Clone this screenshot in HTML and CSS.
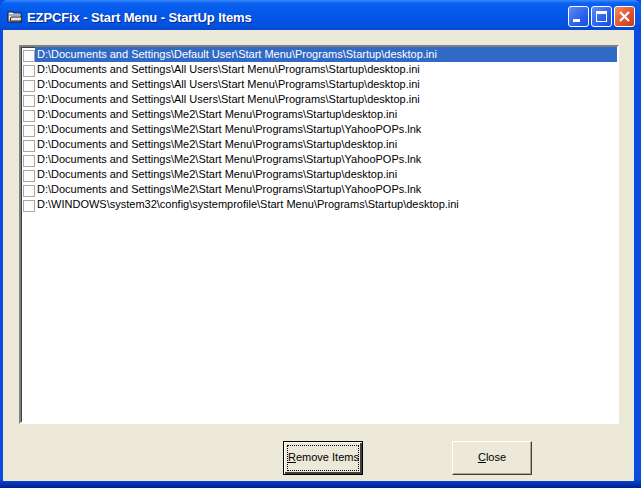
FILE: index.html
```html
<!DOCTYPE html>
<html lang="en">
<head>
    <meta charset="UTF-8">
    <title>EZPCFix - Start Menu - StartUp Items</title>
    <link rel="stylesheet" href="styles.css">
</head>
<body>
    <div class="window">
        <div class="titlebar">
            <svg class="app-icon" width="16" height="14" viewBox="0 0 16 14">
                <path d="M1 2h5l1 1h7v9H1z" fill="#f4f4f4" stroke="#202020" stroke-width="1.2"/>
                <path d="M2 5h12" stroke="#7a9ad0" stroke-width="1.5"/>
                <path d="M3 11l1-4h11l-1 4z" fill="#e6e6e6" stroke="#202020" stroke-width="1"/>
            </svg>
            <div class="title">EZPCFix - Start Menu - StartUp Items</div>
            <div class="caption-buttons">
                <div class="cap-btn">
                    <svg width="21" height="21" viewBox="0 0 21 21"><rect x="5" y="13" width="7" height="3" fill="#fff"/></svg>
                </div>
                <div class="cap-btn">
                    <svg width="21" height="21" viewBox="0 0 21 21"><rect x="5.5" y="5.5" width="10" height="10" fill="none" stroke="#fff"/><rect x="5" y="5" width="11" height="3" fill="#fff"/></svg>
                </div>
                <div class="cap-btn close">
                    <svg width="21" height="21" viewBox="0 0 21 21"><path d="M6 6l9 9M15 6l-9 9" stroke="#fff" stroke-width="2.2"/></svg>
                </div>
            </div>
        </div>
        <div class="frame">
            <div class="client">
                <div class="listbox">
                    <div class="row selected"><span class="check"></span><span class="label">D:\Documents and Settings\Default User\Start Menu\Programs\Startup\desktop.ini</span></div>
                    <div class="row"><span class="check"></span><span class="label">D:\Documents and Settings\All Users\Start Menu\Programs\Startup\desktop.ini</span></div>
                    <div class="row"><span class="check"></span><span class="label">D:\Documents and Settings\All Users\Start Menu\Programs\Startup\desktop.ini</span></div>
                    <div class="row"><span class="check"></span><span class="label">D:\Documents and Settings\All Users\Start Menu\Programs\Startup\desktop.ini</span></div>
                    <div class="row"><span class="check"></span><span class="label">D:\Documents and Settings\Me2\Start Menu\Programs\Startup\desktop.ini</span></div>
                    <div class="row"><span class="check"></span><span class="label">D:\Documents and Settings\Me2\Start Menu\Programs\Startup\YahooPOPs.lnk</span></div>
                    <div class="row"><span class="check"></span><span class="label">D:\Documents and Settings\Me2\Start Menu\Programs\Startup\desktop.ini</span></div>
                    <div class="row"><span class="check"></span><span class="label">D:\Documents and Settings\Me2\Start Menu\Programs\Startup\YahooPOPs.lnk</span></div>
                    <div class="row"><span class="check"></span><span class="label">D:\Documents and Settings\Me2\Start Menu\Programs\Startup\desktop.ini</span></div>
                    <div class="row"><span class="check"></span><span class="label">D:\Documents and Settings\Me2\Start Menu\Programs\Startup\YahooPOPs.lnk</span></div>
                    <div class="row"><span class="check"></span><span class="label">D:\WINDOWS\system32\config\systemprofile\Start Menu\Programs\Startup\desktop.ini</span></div>
                </div>
                <div class="actions">
                    <button class="btn default"><span class="focus"><u>R</u>emove Items</span></button>
                    <button class="btn"><span class="focus"><u>C</u>lose</span></button>
                </div>
            </div>
        </div>
    </div>
</body>
</html>
```

FILE: styles.css
```css
body {
    margin: 0;
    padding: 0;
    background: #0a4be0;
    font-family: "Liberation Sans", Arial, sans-serif;
}

.window {
    width: 641px;
    height: 488px;
    display: flex;
    flex-direction: column;
    background: #0a4be0;
    border-radius: 7px 7px 0 0;
    overflow: hidden;
}

.titlebar {
    height: 30px;
    display: flex;
    align-items: center;
    background: linear-gradient(#3d8bff 0, #0a62f0 3px, #0558ea 40%, #0352e2 80%, #0448d4 100%);
}

.app-icon {
    margin-left: 7px;
    margin-top: 4px;
}

.title {
    margin-left: 4px;
    margin-top: 4px;
    color: #fff;
    font-family: "Liberation Sans", Arial, sans-serif;
    font-weight: bold;
    font-size: 13px;
    letter-spacing: -0.1px;
    text-shadow: 1px 1px 0 #0a2a8a;
    flex: 1;
}

.caption-buttons {
    display: flex;
    gap: 2px;
    margin-right: 6px;
    margin-top: 2px;
}

.cap-btn {
    width: 21px;
    height: 21px;
    border: 1px solid #fff;
    border-radius: 3px;
    box-sizing: border-box;
    background: linear-gradient(135deg, #5a8cf8 0%, #2a62ec 60%, #1a4ed8 100%);
    overflow: hidden;
}

.cap-btn svg {
    display: block;
    margin: -1px;
}

.cap-btn.close {
    background: linear-gradient(135deg, #f08a60 0%, #e0502c 60%, #c43c1a 100%);
}

.frame {
    flex: 1;
    padding: 0 7px 7px 3px;
    display: flex;
    background: linear-gradient(#0a4be0 0, #0a4be0 98%, #00208c 100%);
}

.client {
    flex: 1;
    background: #ece9d8;
    padding: 15px 15px 0 16px;
    display: flex;
    flex-direction: column;
}

.listbox {
    height: 375px;
    background: #fff;
    border-top: 2px solid #808080;
    border-left: 2px solid #808080;
    border-right: 2px solid #fff;
    border-bottom: 2px solid #fff;
    box-shadow: inset 1px 1px 0 #404040;
}

.row {
    height: 15px;
    display: flex;
    font-size: 11px;
    line-height: 15px;
    color: #000;
}

.check {
    width: 10px;
    height: 10px;
    margin: 3px 0 0 2px;
    border: 1px solid #a8a8a8;
    background: #fcfcfc;
    flex-shrink: 0;
}

.label {
    flex: 1;
    padding-left: 2px;
    white-space: nowrap;
}

.row.selected .label {
    background: #316ac5;
    color: #fff;
}

.actions {
    display: flex;
    padding: 17px 0 0 264px;
    gap: 89px;
}

.btn {
    width: 80px;
    height: 34px;
    padding: 0;
    background: #ece9d8;
    border: 1px solid;
    border-color: #fff #404040 #404040 #fff;
    box-shadow: inset -1px -1px 0 #aca899;
    font-family: "Liberation Sans", Arial, sans-serif;
    font-size: 11px;
    color: #000;
    display: flex;
    align-items: center;
    justify-content: center;
}

.btn.default {
    border: 1px solid #000;
    box-shadow: inset 1px 1px 0 #fff, inset -2px -2px 0 #404040;
}

.focus {
    display: block;
    width: 72px;
    height: 26px;
    line-height: 23px;
    text-align: center;
    white-space: nowrap;
    box-sizing: border-box;
    border: 1px dotted transparent;
}

.btn.default .focus {
    border-color: #000;
}
```
